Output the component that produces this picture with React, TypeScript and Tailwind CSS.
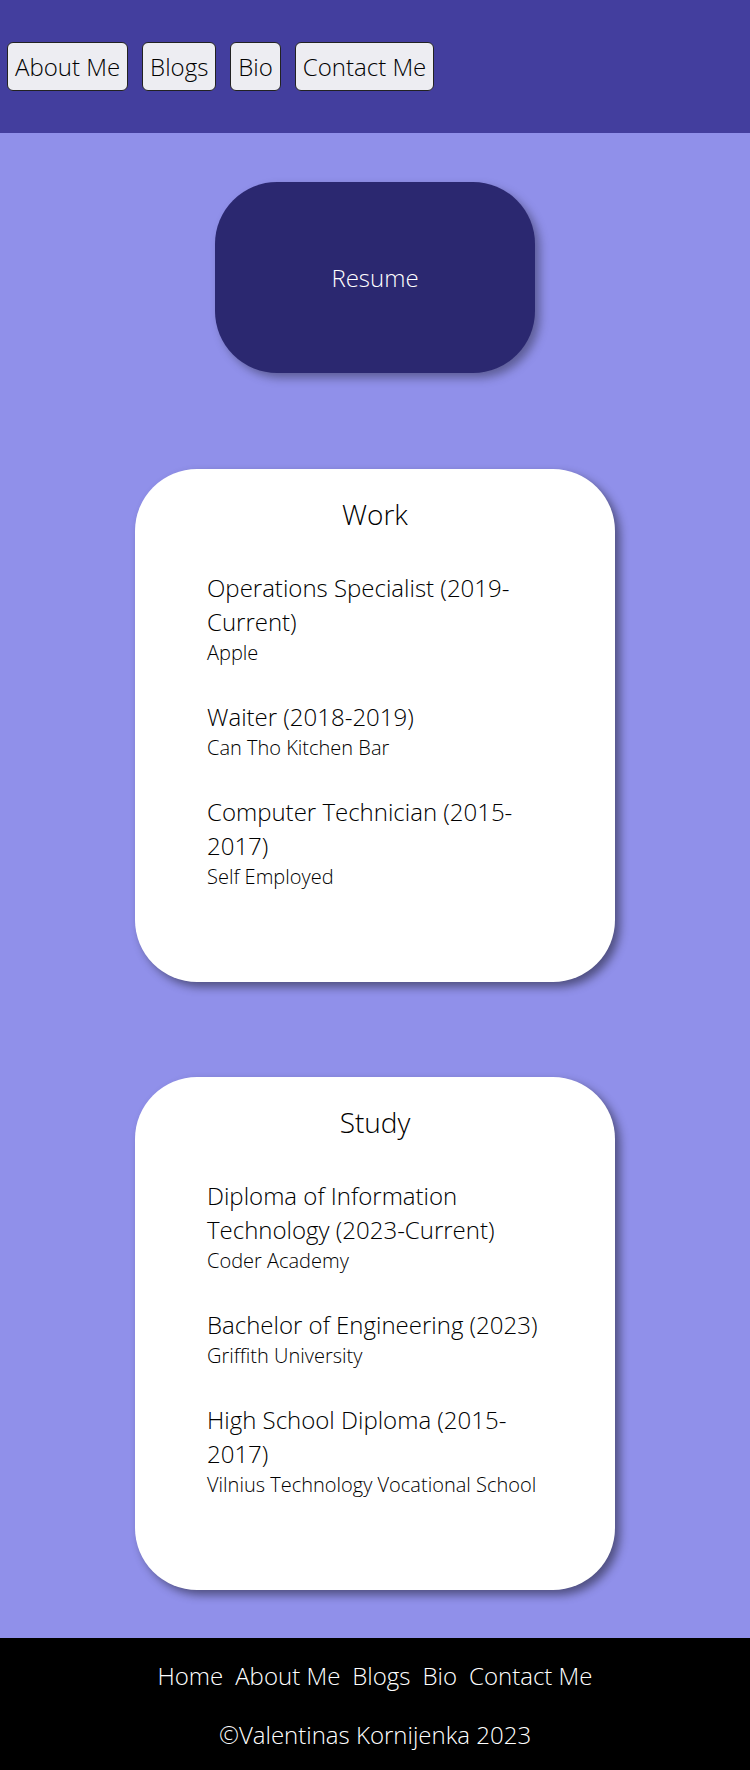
const navLinks = ["About Me", "Blogs", "Bio", "Contact Me"];

const work = [
  { title: "Operations Specialist (2019-Current)", place: "Apple" },
  { title: "Waiter (2018-2019)", place: "Can Tho Kitchen Bar" },
  { title: "Computer Technician (2015-2017)", place: "Self Employed" },
];

const study = [
  { title: "Diploma of Information Technology (2023-Current)", place: "Coder Academy" },
  { title: "Bachelor of Engineering (2023)", place: "Griffith University" },
  { title: "High School Diploma (2015-2017)", place: "Vilnius Technology Vocational School" },
];

function Card({ heading, items }: { heading: string; items: { title: string; place: string }[] }) {
  return (
    <section className="w-[480px] bg-white rounded-[62px] shadow-[5px_5px_10px_rgba(0,0,0,0.45)] px-[72px] pt-[26px] pb-[92px] text-black">
      <h2 className="text-center text-[28px] leading-[38px]">{heading}</h2>
      <div className="mt-[38px] flex flex-col gap-[34px]">
        {items.map((item) => (
          <div key={item.title}>
            <h3 className="text-[24px] leading-[34px]">{item.title}</h3>
            <p className="text-[20px] leading-[27px]">{item.place}</p>
          </div>
        ))}
      </div>
    </section>
  );
}

export default function App() {
  return (
    <div className="min-h-[1770px] flex flex-col bg-[#9090ea] font-['Open_Sans',sans-serif] font-light">
      <header className="h-[133px] bg-[#433e9e] flex items-center gap-[14px] pl-[7px]">
        {navLinks.map((link) => (
          <button
            key={link}
            className="h-[49px] px-[7px] text-[24px] leading-[32px] text-black bg-[#ededf2] border border-[#222] rounded-[6px]"
          >
            {link}
          </button>
        ))}
      </header>

      <main className="flex flex-col items-center pb-[48px]">
        <button className="mt-[49px] w-[320px] h-[191px] rounded-[62px] bg-[#2b2870] text-white text-[24px] shadow-[5px_5px_10px_rgba(0,0,0,0.35)]">
          Resume
        </button>
        <div className="mt-[96px]">
          <Card heading="Work" items={work} />
        </div>
        <div className="mt-[95px]">
          <Card heading="Study" items={study} />
        </div>
      </main>

      <footer className="mt-auto h-[133px] bg-black text-white flex flex-col items-center pt-[21px]">
        <nav className="flex gap-[12px] text-[24px] leading-[33px]">
          <a>Home</a>
          {navLinks.map((link) => (
            <a key={link}>{link}</a>
          ))}
        </nav>
        <p className="mt-[26px] text-[24px] leading-[33px]">©Valentinas Kornijenka 2023</p>
      </footer>
    </div>
  );
}
